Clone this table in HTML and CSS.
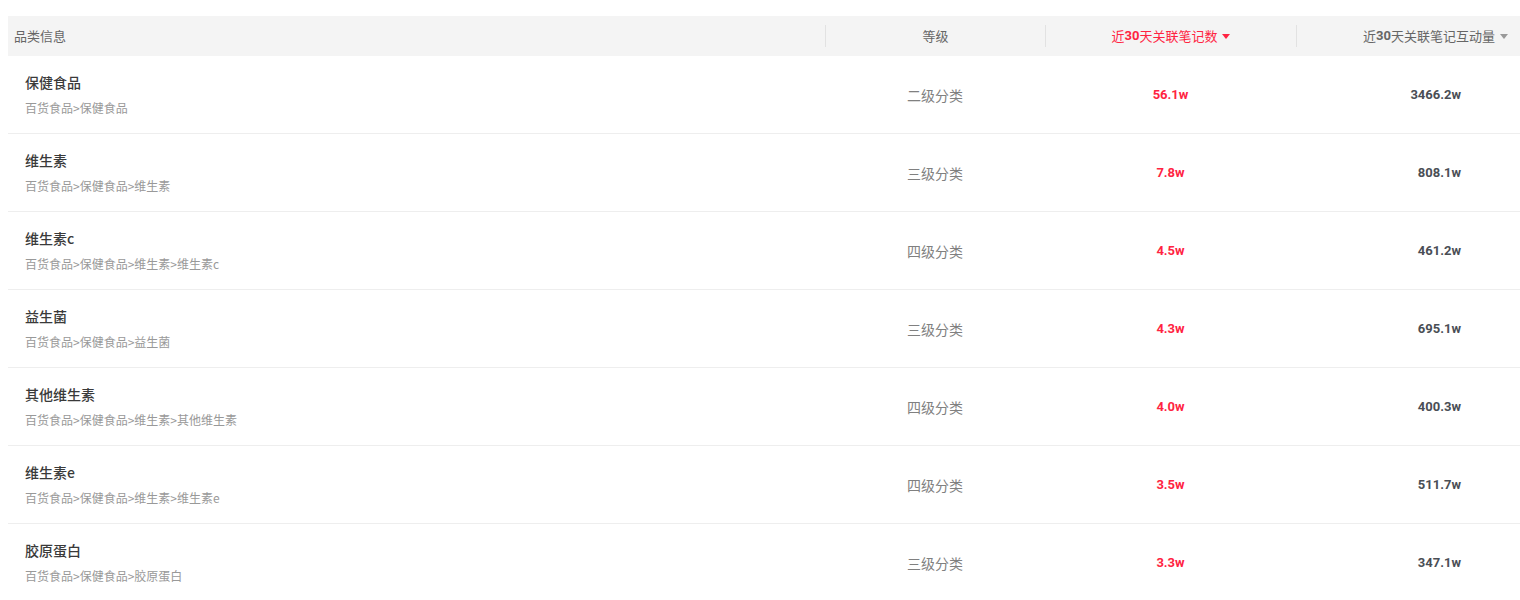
FILE: index.html
```html
<!DOCTYPE html>
<html lang="zh">
<head>
<meta charset="utf-8">
<link rel="stylesheet" href="styles.css">
</head>
<body>
<div class="wrap">
  <div class="table">
    <div class="head">
      <div class="hcell c1">品类信息</div>
      <div class="hcell c2">等级</div>
      <div class="hcell c3 active">近<span class="num">30</span>天关联笔记数<i class="tri"></i></div>
      <div class="hcell c4">近<span class="num">30</span>天关联笔记互动量<i class="tri"></i></div>
    </div>

    <div class="row">
      <div class="cell c1"><div class="title">保健食品</div><div class="path">百货食品&gt;保健食品</div></div>
      <div class="cell c2">二级分类</div>
      <div class="cell c3 num red">56.1w</div>
      <div class="cell c4 num">3466.2w</div>
    </div>
    <div class="row">
      <div class="cell c1"><div class="title">维生素</div><div class="path">百货食品&gt;保健食品&gt;维生素</div></div>
      <div class="cell c2">三级分类</div>
      <div class="cell c3 num red">7.8w</div>
      <div class="cell c4 num">808.1w</div>
    </div>
    <div class="row">
      <div class="cell c1"><div class="title">维生素c</div><div class="path">百货食品&gt;保健食品&gt;维生素&gt;维生素c</div></div>
      <div class="cell c2">四级分类</div>
      <div class="cell c3 num red">4.5w</div>
      <div class="cell c4 num">461.2w</div>
    </div>
    <div class="row">
      <div class="cell c1"><div class="title">益生菌</div><div class="path">百货食品&gt;保健食品&gt;益生菌</div></div>
      <div class="cell c2">三级分类</div>
      <div class="cell c3 num red">4.3w</div>
      <div class="cell c4 num">695.1w</div>
    </div>
    <div class="row">
      <div class="cell c1"><div class="title">其他维生素</div><div class="path">百货食品&gt;保健食品&gt;维生素&gt;其他维生素</div></div>
      <div class="cell c2">四级分类</div>
      <div class="cell c3 num red">4.0w</div>
      <div class="cell c4 num">400.3w</div>
    </div>
    <div class="row">
      <div class="cell c1"><div class="title">维生素e</div><div class="path">百货食品&gt;保健食品&gt;维生素&gt;维生素e</div></div>
      <div class="cell c2">四级分类</div>
      <div class="cell c3 num red">3.5w</div>
      <div class="cell c4 num">511.7w</div>
    </div>
    <div class="row">
      <div class="cell c1"><div class="title">胶原蛋白</div><div class="path">百货食品&gt;保健食品&gt;胶原蛋白</div></div>
      <div class="cell c2">三级分类</div>
      <div class="cell c3 num red">3.3w</div>
      <div class="cell c4 num">347.1w</div>
    </div>
  </div>
</div>
</body>
</html>
```

FILE: styles.css
```css
html, body {
  margin: 0;
  padding: 0;
  background: #fff;
}
body {
  font-family: "Noto Sans CJK SC", "Noto Sans", sans-serif;
  color: #333;
}
.wrap {
  padding: 16px 0 0 8px;
}
.table {
  width: 1512px;
}
.head, .row {
  display: grid;
  grid-template-columns: 817px 220px 251px 1fr;
}
.head {
  height: 40px;
  background: #f4f4f4;
  align-items: center;
}
.hcell {
  font-size: 13px;
  color: #666;
  line-height: 22px;
  display: flex;
  align-items: center;
  justify-content: center;
  border-left: 1px solid #e2e2e2;
}
.hcell.c1 {
  justify-content: flex-start;
  padding-left: 6px;
  border-left: none;
}
.hcell.c4 {
  justify-content: flex-end;
  padding-right: 12px;
}
.hcell.active {
  color: #ff2442;
}
.hcell .num {
  font-family: "Roboto", sans-serif;
  font-weight: 700;
}
.tri {
  display: inline-block;
  width: 0;
  height: 0;
  margin-left: 5px;
  border-left: 4px solid transparent;
  border-right: 4px solid transparent;
  border-top: 5px solid #999;
}
.hcell.active .tri {
  border-top-color: #ff2442;
}
.row {
  height: 77px;
  border-bottom: 1px solid #eeeeee;
  align-items: center;
}
.row:last-child {
  border-bottom: none;
}
.cell.c1 {
  padding: 0 0 0 17px;
  align-self: start;
  padding-top: 16px;
}
.title {
  font-size: 14px;
  line-height: 20px;
  font-weight: 500;
  color: #3a3a3a;
}
.path {
  font-size: 12px;
  line-height: 20px;
  margin-top: 6px;
  color: #999;
}
.cell.c2 {
  text-align: center;
  font-size: 14px;
  color: #808080;
}
.cell.num {
  font-family: "Roboto", sans-serif;
  font-weight: 700;
  font-size: 13px;
  color: #4a4e55;
}
.cell.c3 {
  text-align: center;
}
.cell.red {
  color: #ff2442;
}
.cell.c4 {
  text-align: right;
  padding-right: 59px;
}
```
